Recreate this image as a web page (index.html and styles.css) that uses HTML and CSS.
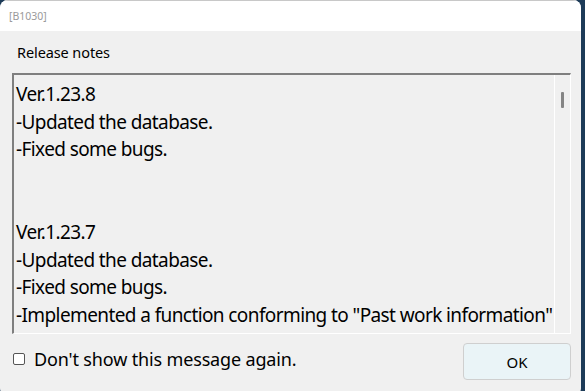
FILE: index.html
```html
<!DOCTYPE html>
<html>
<head>
<meta charset="utf-8">
<link rel="stylesheet" href="styles.css">
</head>
<body>
<div class="window">
  <div class="titlebar">[B1030]</div>
  <div class="content">
    <div class="label">Release notes</div>
    <div class="notes">
      <div class="notes-text">
        <div>Ver.1.23.8</div>
        <div>-Updated the database.</div>
        <div>-Fixed some bugs.</div>
        <div>&nbsp;</div>
        <div>&nbsp;</div>
        <div>Ver.1.23.7</div>
        <div>-Updated the database.</div>
        <div>-Fixed some bugs.</div>
        <div>-Implemented a function conforming to "Past work information"</div>
      </div>
      <div class="scrollbar"><div class="thumb"></div></div>
    </div>
    <div class="footer">
      <label class="check"><span class="box"></span><span>Don't show this message again.</span></label>
      <button class="ok">OK</button>
    </div>
  </div>
</div>
</body>
</html>
```
FILE: styles.css
```css
html, body {
  margin: 0;
  padding: 0;
}
body {
  background: #1d3b58;
  width: 585px;
  height: 391px;
  overflow: hidden;
  font-family: "Noto Sans", "Open Sans", sans-serif;
}
.window {
  width: 581px;
  height: 396px;
  background: #f0f0f0;
  border-radius: 8px;
  overflow: hidden;
  display: flex;
  flex-direction: column;
}
.titlebar {
  height: 31px;
  background: #ffffff;
  color: #9a9a9a;
  font-size: 10.5px;
  line-height: 31px;
  padding-left: 9px;
  box-sizing: border-box;
  border-top: 1px solid #c8c8c8;
}
.content {
  display: flex;
  flex-direction: column;
  padding: 0 10px 0 12px;
}
.label {
  height: 42px;
  font-size: 14.5px;
  line-height: 42px;
  padding-left: 5px;
  letter-spacing: -0.1px;
  color: #000;
}
.notes {
  width: 559px;
  height: 261px;
  box-sizing: border-box;
  border-top: 2px solid #7f7f7f;
  border-left: 2px solid #7f7f7f;
  border-right: 1px solid #ffffff;
  border-bottom: 1px solid #ffffff;
  display: flex;
  overflow: hidden;
}
.notes-text {
  flex: 1;
  padding: 6px 0 0 2px;
  font-size: 19px;
  line-height: 27.6px;
  letter-spacing: -0.6px;
  color: #000;
  white-space: nowrap;
  overflow: hidden;
}
.scrollbar {
  width: 16px;
  border-left: 1px solid #ffffff;
  display: flex;
  justify-content: center;
  padding-top: 17px;
  box-sizing: border-box;
}
.thumb {
  width: 3px;
  height: 16px;
  background: #858585;
  border-radius: 1px;
}
.footer {
  display: flex;
  justify-content: space-between;
  align-items: center;
  height: 53px;
  padding-right: 0;
}
.check {
  display: flex;
  align-items: center;
  gap: 9px;
  font-size: 18px;
  letter-spacing: -0.15px;
  color: #000;
  margin-left: 1px;
  margin-top: -4px;
}
.box {
  width: 10px;
  height: 10px;
  border: 1px solid #555;
  border-radius: 2px;
  background: #fff;
}
.ok {
  width: 108px;
  height: 37px;
  background: #eaf4f7;
  border: 1px solid #cfcfcf;
  border-radius: 4px;
  font-family: "Noto Sans", "Open Sans", sans-serif;
  font-size: 15px;
  color: #000;
  margin-right: 0;
  margin-top: 2px;
}
```
